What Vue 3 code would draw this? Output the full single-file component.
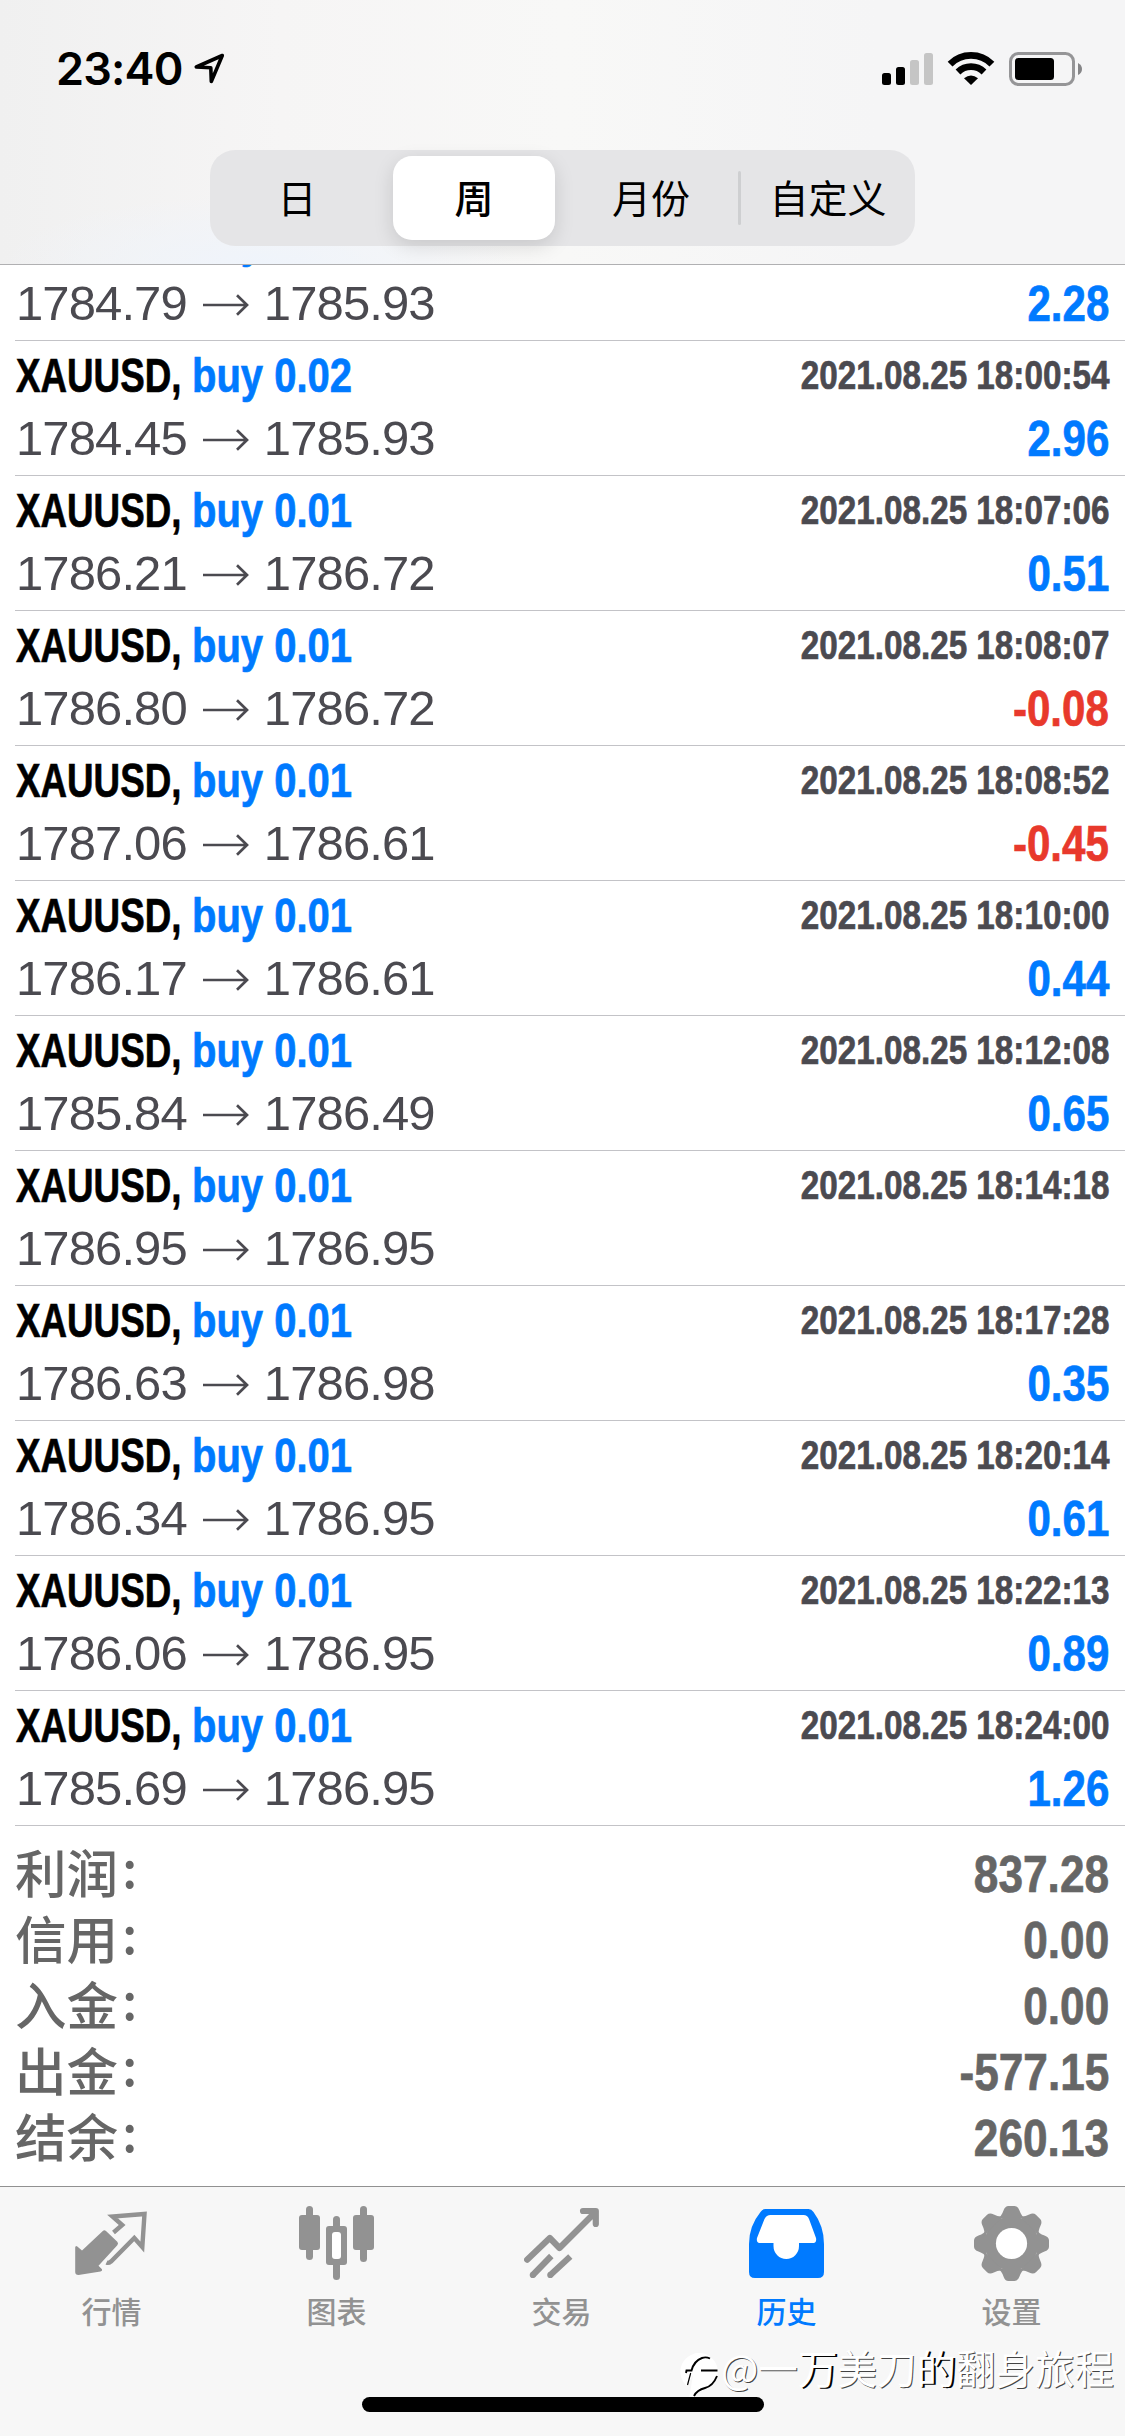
<script setup>
const ranges = ['日', '周', '月份', '自定义']

const trades = [
  { lots: '0.01', time: '2021.08.25 17:58:31', open: '1784.79', close: '1785.93', profit: '2.28' },
  { lots: '0.02', time: '2021.08.25 18:00:54', open: '1784.45', close: '1785.93', profit: '2.96' },
  { lots: '0.01', time: '2021.08.25 18:07:06', open: '1786.21', close: '1786.72', profit: '0.51' },
  { lots: '0.01', time: '2021.08.25 18:08:07', open: '1786.80', close: '1786.72', profit: '-0.08' },
  { lots: '0.01', time: '2021.08.25 18:08:52', open: '1787.06', close: '1786.61', profit: '-0.45' },
  { lots: '0.01', time: '2021.08.25 18:10:00', open: '1786.17', close: '1786.61', profit: '0.44' },
  { lots: '0.01', time: '2021.08.25 18:12:08', open: '1785.84', close: '1786.49', profit: '0.65' },
  { lots: '0.01', time: '2021.08.25 18:14:18', open: '1786.95', close: '1786.95', profit: '' },
  { lots: '0.01', time: '2021.08.25 18:17:28', open: '1786.63', close: '1786.98', profit: '0.35' },
  { lots: '0.01', time: '2021.08.25 18:20:14', open: '1786.34', close: '1786.95', profit: '0.61' },
  { lots: '0.01', time: '2021.08.25 18:22:13', open: '1786.06', close: '1786.95', profit: '0.89' },
  { lots: '0.01', time: '2021.08.25 18:24:00', open: '1785.69', close: '1786.95', profit: '1.26' },
]

const summary = [
  ['利润', '837.28'],
  ['信用', '0.00'],
  ['入金', '0.00'],
  ['出金', '-577.15'],
  ['结余', '260.13'],
]
</script>

<template>
  <div class="screen">
    <header class="top">
      <div class="status">
        <span class="clock">23:40</span>
        <svg class="loc" width="34" height="34" viewBox="0 0 34 34">
          <path d="M29.300 3.500 L3.300 15 L17.800 15.800 L18.300 29.500 Z" fill="none" stroke="#000" stroke-width="3.600" stroke-linejoin="round" />
        </svg>
        <span class="grow"></span>
        <svg class="sysicons" width="204" height="40" viewBox="0 0 204 40">
          <rect x="2" y="23" width="9" height="12" rx="2.500" />
          <rect x="16" y="17" width="9" height="18" rx="2.500" />
          <rect x="30" y="10" width="9" height="25" rx="2.500" fill="#c5c5c5" />
          <rect x="44" y="3" width="9" height="32" rx="2.500" fill="#c5c5c5" />
          <g fill="none" stroke="#000" stroke-width="6.800">
            <path d="M70.100 14.100 A29.500 29.500 0 0 1 111.900 14.100" />
            <path d="M78 22 A18.500 18.500 0 0 1 104 22" />
          </g>
          <path d="M84 28.300 Q91 22.500 98 28.300 L91 35 Z" />
          <rect x="130.500" y="3.500" width="63" height="31" rx="8" fill="none" stroke="#959597" stroke-width="3" />
          <rect x="135" y="8" width="39" height="22" rx="3.500" />
          <path d="M198 13 Q202 15 202 19 Q202 23 198 25 Z" fill="#858587" />
        </svg>
      </div>
      <nav class="segments">
        <div v-for="(r, i) in ranges" :key="r" class="segment" :class="{ selected: i === 1, divided: i === 3 }"><span>{{ r }}</span></div>
      </nav>
    </header>

    <main class="list">
      <div v-for="t in trades" :key="t.time" class="trade">
        <div class="row head">
          <div class="order">
            <span class="symbol bold">XAUUSD,</span>
            <span class="side bold">buy {{ t.lots }}</span>
          </div>
          <span class="time bold">{{ t.time }}</span>
        </div>
        <div class="row prices">
          <span class="quote">{{ t.open }}<svg class="arrow" width="46" height="22" viewBox="0 0 46 22"><path d="M0 11H44M34 1.200L44 11L34 20.800" /></svg>{{ t.close }}</span>
          <span class="profit bold" :class="{ loss: t.profit[0] === '-' }">{{ t.profit }}</span>
        </div>
      </div>
      <div class="summary">
        <div v-for="s in summary" :key="s[0]" class="total">
          <span class="label">{{ s[0] }}<i>:</i></span>
          <span class="amount bold">{{ s[1] }}</span>
        </div>
      </div>
    </main>

    <footer class="tabs">
      <div class="tab">
        <svg width="75" height="76" viewBox="0 0 75 76">
          <path d="M28.800 25 Q30.300 23.300 32 25 L43.300 35.800 Q44.800 37.500 43.300 39.200 L24.500 59.800 L28 63.200 Q28.600 65 26.500 65.600 L4.500 69 Q1.200 69 1.200 66 V41.500 Q1.500 39 3.300 40.500 L8 44.600 Z" />
          <path d="M39.500 26.500 L48.200 19 L38.500 10.500 L70.500 8 L68.300 41 L60.300 32 L37 55.500 Q34.500 57.500 32.500 56.500" class="outline" />
        </svg>
        <span>行情</span>
      </div>
      <div class="tab">
        <svg width="75" height="76" viewBox="0.5 0 75 76">
          <rect x="7.500" y="0" width="7" height="54" rx="3.500" />
          <rect x="0.500" y="9" width="21" height="35" rx="3" />
          <rect x="61.500" y="0" width="7" height="56" rx="3.500" />
          <rect x="54.500" y="9" width="21" height="35" rx="3" />
          <rect x="34.500" y="10" width="7" height="64" rx="3.500" />
          <rect x="27.500" y="20" width="21" height="39" rx="3" />
          <rect x="33.500" y="26" width="9" height="27" rx="3" fill="#fff" />
        </svg>
        <span>图表</span>
      </div>
      <div class="tab">
        <svg width="75" height="76" viewBox="0 0 75 76">
          <g fill="none" stroke="#929292" stroke-width="6.200" stroke-linecap="round" stroke-linejoin="round">
            <path d="M3.100 53.700 L25.800 32 L35.500 42 L71 6.500 M59 5 H71.800 V18" />
            <path d="M8.800 69 L27.300 50 M26.300 69 L46.300 50.500" stroke-linecap="butt" />
            <path d="M8.800 69 h.01 M26.300 69 h.01" />
          </g>
        </svg>
        <span>交易</span>
      </div>
      <div class="tab active">
        <svg width="75" height="76" viewBox="0.5 0 75 76">
          <path d="M17 3 H60 Q63 3 65 6 Q75.500 20 75.500 38 V66 Q75.500 72 69.500 72 H6.500 Q0.500 72 0.500 66 V38 Q0.500 20 12 6 Q14 3 17 3 Z" />
          <path fill="#fff" d="M22 9 H55 Q59 9 60.500 13 L67.500 32 Q68.500 37 64 37 H50.500 V40 A12.700 13 0 0 1 25 40 V37 H12 Q7.500 37 8.500 32 L16 13 Q18 9 22 9 Z" />
        </svg>
        <span>历史</span>
      </div>
      <div class="tab">
        <svg width="75" height="76" viewBox="-37.5 -37.5 75 76">
          <circle r="27" />
          <path v-for="n in 8" :key="n" :transform="`rotate(${n * 45})`" d="M-14 -25 Q-10 -27 -8 -33 Q-6.500 -37.500 -3 -37.500 H3 Q6.500 -37.500 8 -33 Q10 -27 14 -25 Z" />
          <circle r="15.600" fill="#fff" />
        </svg>
        <span>设置</span>
      </div>
      <div class="watermark">
        <svg width="40" height="46" viewBox="0 0 40 46">
          <path fill="#fff" d="M7 33 A18.700 18.700 0 1 1 37.500 22 Q34 33 25 35 Q18 37 14 44 L9 46 L13 22 Z" />
          <path d="M6 20 L6.500 17.500 H11.500 Q14 8 22 5 Q26 3.500 30 5.500 M21 17.500 H37.500 M37 23 Q33 33 25 35 Q17 37 14 43" fill="none" stroke="#000" stroke-width="1.900" />
          <path d="M10.700 20 L7.500 32" fill="none" stroke="#000" stroke-width="1.200" />
        </svg>
        <span>@一<b>万</b>美刀<b>的</b>翻身旅程</span>
      </div>
      <div class="home"></div>
    </footer>
  </div>
</template>

<style>
body { background: #fff; }
</style>

<style scoped>
.screen {
  width: 1125px;
  height: 2436px;
  display: flex;
  flex-direction: column;
  overflow: hidden;
  background: #fff;
  font-family: "Liberation Sans", "Noto Sans CJK SC", sans-serif;
}
.top {
  height: 265px;
  flex: none;
  border-bottom: 1px solid #b0b0b2;
  box-sizing: border-box;
  background:
    radial-gradient(ellipse 260px 70px at 260px 264px, #eff4fb, transparent),
    linear-gradient(90deg, #f0f0f0, #f6f5f5 25%, #f8f8f7 50%, #f5f5f6 78%, #f5f5f6);
}
.status {
  display: flex;
  align-items: flex-start;
  height: 150px;
  padding: 0 41px 0 56px;
  box-sizing: border-box;
}
.clock {
  width: 128px;
  margin-top: 41px;
  white-space: nowrap;
  font: 600 45px/56px Inter, sans-serif;
  letter-spacing: -0.8px;
}
.loc { margin: 52px 0 0 9px; }
.grow { flex: 1; }
.sysicons { margin-top: 50px; }
.segments {
  display: flex;
  gap: 3px;
  width: 705px;
  height: 96px;
  margin-left: 210px;
  border-radius: 25px;
  background: #e5e5e7;
}
.segment {
  width: 174px;
  display: flex;
  align-items: center;
  justify-content: center;
  position: relative;
  font: 400 39px/58px "Noto Sans CJK SC", sans-serif;
}
.segment span { margin-top: -4px; }
.selected {
  width: 162px;
  margin: 6px;
  font-weight: 500;
  background: #fff;
  border-radius: 19px;
  box-shadow: 0 6px 20px rgba(0, 0, 0, 0.13);
}
.divided::before {
  content: "";
  position: absolute;
  left: -3px;
  top: 21px;
  width: 3px;
  height: 54px;
  border-radius: 2px;
  background: #cecfd1;
}
.list { flex: 1; overflow: hidden; }
.trade {
  height: 135px;
  margin-left: 15px;
  padding-right: 16px;
  box-sizing: border-box;
  border-bottom: 1px solid #c3c3c7;
}
.trade:first-child { margin-top: -59px; }
.row { display: flex; justify-content: space-between; white-space: nowrap; }
.head { height: 66px; line-height: 69px; }
.prices { height: 64px; line-height: 64px; }
.bold { font-weight: 700; -webkit-text-stroke: 0.7px currentColor; }
.order { display: flex; padding-left: 1px; font-size: 49px; }
.symbol { width: 176px; transform: scaleX(0.75); transform-origin: 0 50%; color: #000; }
.side { transform: scaleX(0.816); transform-origin: 0 50%; color: #007aff; }
.time { font-size: 40px; color: #4b4a50; transform: scaleX(0.831); transform-origin: 100% 50%; }
.quote { padding-left: 1px; font-size: 49px; line-height: 62px; letter-spacing: -0.9px; color: #4b4a50; }
.arrow { margin: 0 15px 4px 16px; fill: none; stroke: #4b4a50; stroke-width: 2.7; }
.profit { font-size: 49.5px; color: #007aff; transform: scaleX(0.85); transform-origin: 100% 50%; }
.loss { color: #e8392c; }
.summary { padding: 15px 16px 0 15px; }
.total { display: flex; justify-content: space-between; height: 66px; line-height: 67px; color: #666; }
.label { font: 500 51.5px/60px "Noto Sans CJK SC", sans-serif; }
.label i { display: inline-block; font-style: normal; margin-left: 4px; transform: translateY(-5px); }
.amount { font-size: 52px; transform: scaleX(0.85); transform-origin: 100% 50%; }
.tabs {
  position: relative;
  flex: none;
  height: 250px;
  display: flex;
  box-sizing: border-box;
  border-top: 1px solid #919191;
  background: #f7f7f7;
}
.tab {
  flex: 1;
  display: flex;
  flex-direction: column;
  align-items: center;
  padding: 19px 2px 0 0;
  color: #929292;
  fill: #929292;
  font: 500 30px/40px "Noto Sans CJK SC", sans-serif;
}
.tab span { margin-top: 8px; }
.outline { fill: none; stroke: #929292; stroke-width: 4.4; }
.active { color: #007aff; fill: #007aff; }
.home {
  position: absolute;
  left: 362px;
  bottom: 24px;
  width: 402px;
  height: 15px;
  border-radius: 8px;
  background: #000;
}
.watermark {
  position: absolute;
  left: 680px;
  top: 166px;
  display: flex;
  align-items: flex-start;
  white-space: nowrap;
  color: #fff;
  font: 400 39.5px/46px "Noto Sans CJK SC", sans-serif;
  text-shadow: 1px 1px 0 #444;
}
.watermark span { margin: -9px 0 0 1px; }
.watermark b { font-weight: 400; text-shadow: 2px 1px 0 #000; }
</style>
